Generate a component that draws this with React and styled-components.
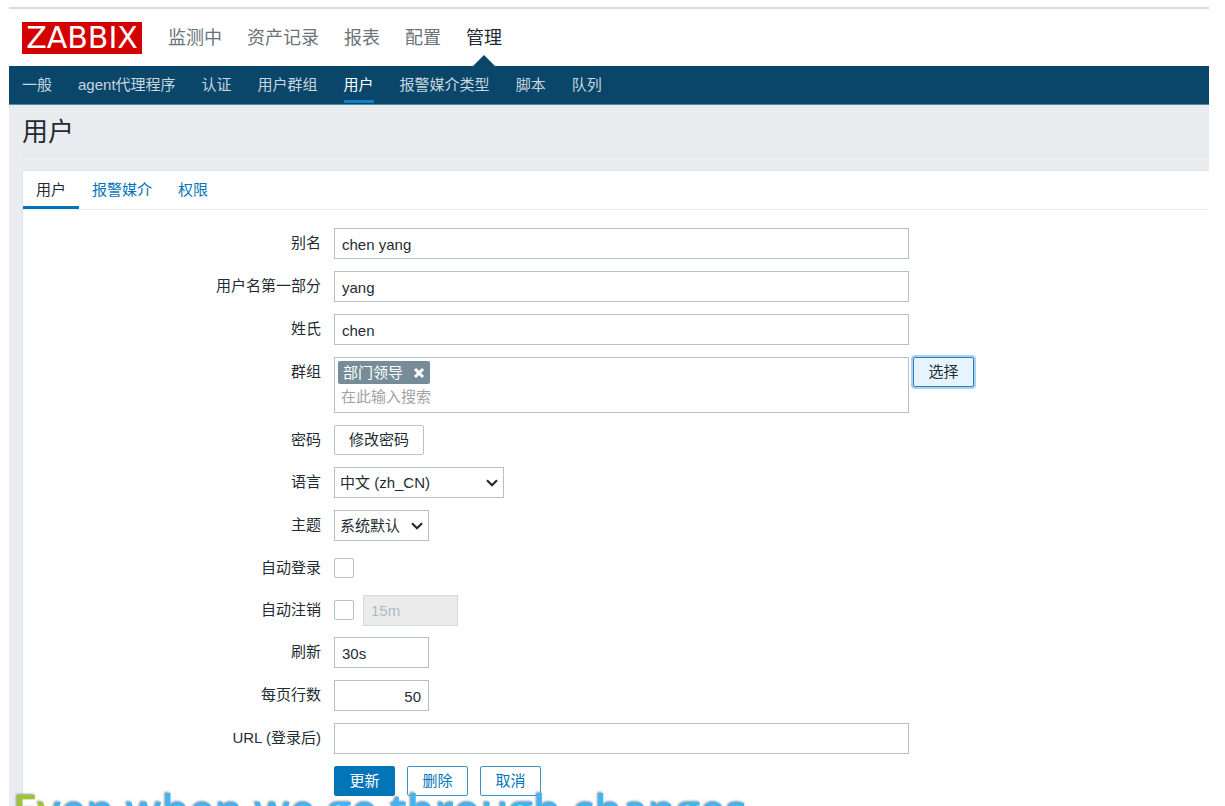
import React from "react";
import styled, { createGlobalStyle } from "styled-components";

const mainMenu = ["监测中", "资产记录", "报表", "配置", "管理"];
const subMenu = [
  "一般",
  "agent代理程序",
  "认证",
  "用户群组",
  "用户",
  "报警媒介类型",
  "脚本",
  "队列",
];
const tabs = ["用户", "报警媒介", "权限"];

const Dropdown = ({ id, width, options }) => (
  <SelectWrapper $width={width}>
    <StyledSelect id={id} name={id}>
      {options.map((option) => (
        <option key={option}>{option}</option>
      ))}
    </StyledSelect>
    <Chevron viewBox="0 0 12 8" aria-hidden="true">
      <path d="M1 1.2 6 6.2 11 1.2" />
    </Chevron>
  </SelectWrapper>
);

const UserForm = () => (
  <StyledForm onSubmit={(e) => e.preventDefault()}>
    <Row>
      <Label htmlFor="alias">别名</Label>
      <TextInput type="text" id="alias" defaultValue="chen yang" />
    </Row>
    <Row>
      <Label htmlFor="name">用户名第一部分</Label>
      <TextInput type="text" id="name" defaultValue="yang" />
    </Row>
    <Row>
      <Label htmlFor="surname">姓氏</Label>
      <TextInput type="text" id="surname" defaultValue="chen" />
    </Row>
    <Row>
      <Label htmlFor="groups">群组</Label>
      <MultiSelect>
        <Tag>
          部门领导
          <TagRemove type="button" aria-label="删除 部门领导">
            <svg width="12" height="12" viewBox="0 0 12 12">
              <path d="M2 2 10 10M10 2 2 10" />
            </svg>
          </TagRemove>
        </Tag>
        <SearchInput type="text" id="groups" placeholder="在此输入搜索" />
      </MultiSelect>
      <Button type="button" $variant="focused">
        选择
      </Button>
    </Row>
    <Row>
      <Label as="span">密码</Label>
      <Button type="button" $variant="plain">
        修改密码
      </Button>
    </Row>
    <Row>
      <Label htmlFor="lang">语言</Label>
      <Dropdown id="lang" width={170} options={["中文 (zh_CN)", "English (en_US)"]} />
    </Row>
    <Row>
      <Label htmlFor="theme">主题</Label>
      <Dropdown id="theme" width={95} options={["系统默认", "蓝", "黑"]} />
    </Row>
    <Row>
      <Label htmlFor="autologin">自动登录</Label>
      <CheckCell>
        <Checkbox type="checkbox" id="autologin" />
      </CheckCell>
    </Row>
    <Row>
      <Label htmlFor="autologout">自动注销</Label>
      <CheckCell>
        <Checkbox type="checkbox" id="autologout" />
        <TextInput
          type="text"
          aria-label="自动注销时间"
          defaultValue="15m"
          disabled
          $short
        />
      </CheckCell>
    </Row>
    <Row>
      <Label htmlFor="refresh">刷新</Label>
      <TextInput type="text" id="refresh" defaultValue="30s" $short />
    </Row>
    <Row>
      <Label htmlFor="rows">每页行数</Label>
      <TextInput type="text" id="rows" defaultValue="50" $short $right />
    </Row>
    <Row>
      <Label htmlFor="url">URL (登录后)</Label>
      <TextInput type="text" id="url" />
    </Row>
    <Row>
      <Label as="span" />
      <Actions>
        <Button type="submit" $variant="primary">
          更新
        </Button>
        <Button type="button">删除</Button>
        <Button type="button">取消</Button>
      </Actions>
    </Row>
  </StyledForm>
);

const App = () => {
  return (
    <Page>
      <GlobalStyle />
      <Header>
        <Logo href="#">ZABBIX</Logo>
        <MainNav>
          {mainMenu.map((item) => (
            <MainLink key={item} href="#" $active={item === "管理"}>
              {item}
            </MainLink>
          ))}
        </MainNav>
      </Header>
      <SubNav>
        {subMenu.map((item) => (
          <SubLink key={item} href="#" $active={item === "用户"}>
            {item}
          </SubLink>
        ))}
      </SubNav>
      <Content>
        <Title>用户</Title>
        <Panel>
          <Tabs>
            {tabs.map((item, index) => (
              <Tab key={item} href="#" $active={index === 0}>
                {item}
              </Tab>
            ))}
          </Tabs>
          <UserForm />
        </Panel>
      </Content>
      <Lyrics>Even when we go through changes</Lyrics>
    </Page>
  );
};

export default App;

const GlobalStyle = createGlobalStyle`
  * {
    box-sizing: border-box;
  }

  body {
    margin: 0;
    background: #fff;
    color: #1f2c33;
  }

  body, input, select, button {
    font-family: "Liberation Sans", "Noto Sans CJK SC", sans-serif;
    font-size: 15px;
  }

  a {
    text-decoration: none;
  }
`;

const Page = styled.div`
  display: flex;
  flex-direction: column;
  min-height: 100vh;
  padding: 7px 16px 0 9px;
`;

const Header = styled.header`
  display: flex;
  align-items: center;
  gap: 26px;
  height: 59px;
  padding: 0 13px;
  border-top: 2px solid #dadae2;
`;

const Logo = styled.a`
  width: 120px;
  height: 32px;
  background: #d40000;
  color: #fff;
  font: 30px/32px "DejaVu Sans", sans-serif;
  text-align: center;
`;

const MainNav = styled.nav`
  display: flex;
  align-self: stretch;
  align-items: center;
  gap: 25px;
`;

const MainLink = styled.a`
  position: relative;
  padding-top: 2px;
  color: ${({ $active }) => ($active ? "#1f2c33" : "#6a7378")};
  font-size: 18px;
  line-height: 55px;

  &::after {
    content: "";
    display: ${({ $active }) => ($active ? "block" : "none")};
    position: absolute;
    bottom: 0;
    left: 50%;
    margin-left: -11px;
    border: 11px solid transparent;
    border-top: 0;
    border-bottom-color: #0a466a;
  }
`;

const SubNav = styled.nav`
  display: flex;
  gap: 26px;
  height: 39px;
  padding: 0 13px;
  background: #0a466a;
  border-bottom: 1px solid #5b88a6;
`;

const SubLink = styled.a`
  height: 37px;
  color: ${({ $active }) => ($active ? "#fff" : "#c8d6df")};
  line-height: 37px;
  border-bottom: 3px solid ${({ $active }) => ($active ? "#0f81c7" : "transparent")};
`;

const Content = styled.main`
  display: flex;
  flex: 1;
  flex-direction: column;
  padding-left: 13px;
  background: #e9edf0;
`;

const Title = styled.h1`
  height: 51px;
  margin: 0 0 14px;
  border-bottom: 1px solid #dfe4e7;
  font-size: 26px;
  font-weight: 400;
  line-height: 55px;
`;

const Panel = styled.section`
  flex: 1;
  background: #fff;
  border: 1px solid #dfe4e7;
  border-width: 1px 0 0 1px;
`;

const Tabs = styled.nav`
  display: flex;
  height: 39px;
  border-bottom: 1px solid #ebeef0;
`;

const Tab = styled.a`
  height: 38px;
  padding: 0 13px;
  border-bottom: 3px solid ${({ $active }) => ($active ? "#0275b8" : "transparent")};
  color: ${({ $active }) => ($active ? "#1f2c33" : "#0275b8")};
  line-height: 37px;
`;

const StyledForm = styled.form`
  display: flex;
  flex-direction: column;
  gap: 12px;
  padding: 18px 0 9px;
`;

const Row = styled.div`
  display: flex;
  align-items: flex-start;
`;

const Label = styled.label`
  flex: none;
  width: 298px;
  margin-right: 13px;
  line-height: 30px;
  text-align: right;
`;

const TextInput = styled.input`
  width: ${({ $short }) => ($short ? "95px" : "575px")};
  height: 31px;
  padding: 1px 7px 0;
  border: 1px solid #b4c1c8;
  background: #fff;
  color: #1f2c33;
  text-align: ${({ $right }) => ($right ? "right" : "left")};

  &:disabled {
    background: #ebebeb;
    border-color: #d3dade;
    color: #acbbc2;
  }
`;

const MultiSelect = styled.div`
  display: flex;
  flex-direction: column;
  align-items: flex-start;
  width: 575px;
  height: 56px;
  margin-right: 4px;
  padding: 3px;
  border: 1px solid #b4c1c8;
`;

const Tag = styled.span`
  display: flex;
  align-items: center;
  gap: 10px;
  height: 24px;
  padding: 0 5px;
  border-radius: 2px;
  background: #768d99;
  color: #fff;
  line-height: 22px;
`;

const TagRemove = styled.button`
  display: flex;
  padding: 0;
  border: 0;
  background: none;

  path {
    stroke: #fff;
    stroke-width: 3;
  }
`;

const SearchInput = styled.input`
  width: 100%;
  height: 26px;
  padding: 0 3px;
  border: 0;
  background: none;
  outline: none;

  &::placeholder {
    color: #a3a3a3;
  }
`;

const variants = {
  plain: "background: #fff; border-color: #b4c1c8; color: #1f2c33;",
  primary: "background: #0275b8; border-color: #0275b8; color: #fff;",
  focused:
    "background: #e6f4ff; border-color: #2f7fb5; color: #1f2c33; box-shadow: 0 0 0 2px #a9d2f5;",
  outline: "background: #fff; border-color: #3d94c8; color: #0275b8;",
};

const Button = styled.button`
  min-width: 61px;
  height: 30px;
  padding: 0 14px;
  border: 1px solid;
  border-radius: 2px;
  line-height: 28px;
  ${({ $variant = "outline" }) => variants[$variant]}
`;

const SelectWrapper = styled.div`
  position: relative;
  width: ${({ $width }) => $width}px;
`;

const StyledSelect = styled.select`
  appearance: none;
  display: block;
  width: 100%;
  height: 31px;
  padding: 0 5px;
  border: 1px solid #b4c1c8;
  border-radius: 0;
  background: #fff;
  color: #1f2c33;
`;

const Chevron = styled.svg`
  position: absolute;
  top: 12px;
  right: 6px;
  width: 12px;
  height: 8px;
  fill: none;
  stroke: #1f2c33;
  stroke-width: 2.2;
  pointer-events: none;
`;

const CheckCell = styled.div`
  display: flex;
  align-items: center;
  gap: 9px;
  height: 30px;
`;

const Checkbox = styled.input`
  appearance: none;
  width: 20px;
  height: 20px;
  margin: 0;
  border: 1px solid #b4c1c8;
  border-radius: 2px;
  background: #fff;

  &:checked {
    background: #0275b8;
  }
`;

const Actions = styled.div`
  display: flex;
  gap: 12px;
`;

/* desktop lyrics strip floating over the bottom edge of the window */
const Lyrics = styled.p`
  position: fixed;
  bottom: -31px;
  left: 13px;
  margin: 0;
  background: linear-gradient(to right, #9cc62b 34px, #41b4f5 34px);
  background-clip: text;
  color: transparent;
  filter: drop-shadow(-1px -1px 1px #8a949c);
  font: 600 44px/56px "Open Sans", sans-serif;
  white-space: nowrap;
  pointer-events: none;
`;
